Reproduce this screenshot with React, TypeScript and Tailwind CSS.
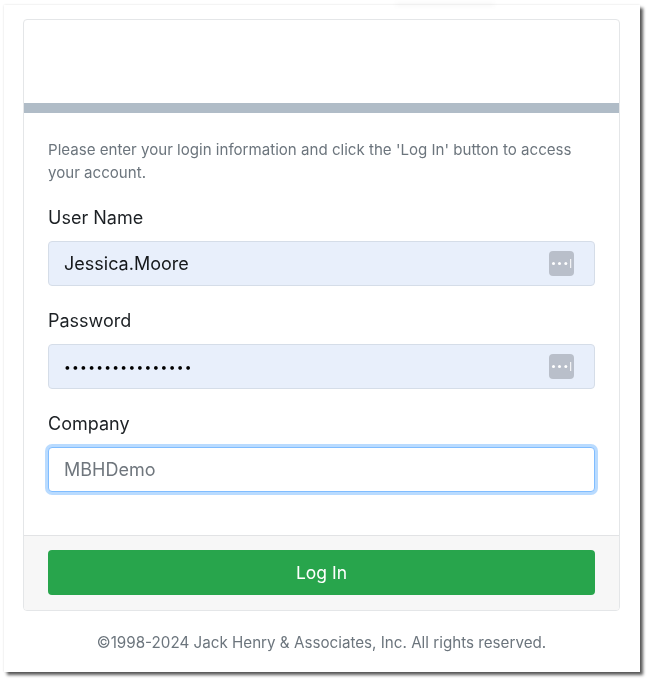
const sans = "font-['Inter','Liberation_Sans',sans-serif]";

function KeyIcon() {
  return (
    <svg className="h-[25px] w-[25px] shrink-0" viewBox="0 0 25 25">
      <rect width="25" height="25" rx="4" fill="#b9bfca" />
      <circle cx="4.5" cy="12.5" r="1.5" fill="#fff" />
      <circle cx="10.5" cy="12.5" r="1.5" fill="#fff" />
      <circle cx="16.8" cy="12.5" r="1.5" fill="#fff" />
      <path d="M21.7 8v9" stroke="#fff" strokeWidth="1" />
    </svg>
  );
}

function Field({ label, value, dots }: { label: string; value: string; dots?: boolean }) {
  return (
    <div className="flex flex-col">
      <label className="mb-[11px] text-[18px] leading-[24px] text-[#1c2024]">{label}</label>
      <div className="flex h-[45px] items-center justify-between rounded-[4px] border border-[#d5dde8] bg-[#e8effb] pl-[15px] pr-[20px]">
        <span className={dots ? "text-[12px] tracking-[1.3px] text-black" : "text-[18px] text-[#14171a]"}>{value}</span>
        <KeyIcon />
      </div>
    </div>
  );
}

export default function App() {
  return (
    <div className={`relative h-[684px] w-[652px] bg-white pb-[12px] pl-[4px] pr-[12px] pt-[5px] blur-[0.5px] ${sans}`}>
      <div className="absolute left-[395px] top-[3px] h-[3px] w-[100px] rounded-full bg-black/[0.03] blur-[2px]" />
      <div className="h-[667px] w-[636px] bg-white pl-[19px] pr-[20px] pt-[14px] shadow-[3px_3px_3px_rgba(0,0,0,0.65),0_0_2px_rgba(0,0,0,0.12)]">
        <div className="flex h-[592px] flex-col overflow-hidden rounded-[4px] border border-[#e4e6e8] bg-white">
          <div className="h-[83px] shrink-0" />
          <div className="h-[10px] shrink-0 bg-[#b0bcc7]" />
          <div className="flex flex-1 flex-col px-[24px] pt-[25px]">
            <p className="mb-[22px] text-[15.1px] leading-[23px] text-[#6c757d]">
              Please enter your login information and click the 'Log In' button to access your account.
            </p>
            <div className="flex flex-col gap-[23px]">
              <Field label="User Name" value="Jessica.Moore" />
              <Field label="Password" value="••••••••••••••••" dots />
              <div className="flex flex-col">
                <label className="mb-[11px] text-[18px] leading-[24px] text-[#1c2024]">Company</label>
                <div className="flex h-[45px] items-center rounded-[4px] border border-[#80bdff] bg-white pl-[15px] text-[18px] text-[#6f767d] shadow-[0_0_0_3px_rgba(128,189,255,0.55)]">
                  MBHDemo
                </div>
              </div>
            </div>
          </div>
          <div className="h-[75px] shrink-0 border-t border-[#e2e3e5] bg-[#f7f7f7] px-[24px] pt-[14px]">
            <button className="h-[45px] w-full rounded-[4px] bg-[#28a54c] pt-[2px] text-[17.5px] text-white">Log In</button>
          </div>
        </div>
        <p className="mt-[22px] text-center text-[15.2px] leading-[20px] text-[#6c757d]">
          ©1998-2024 Jack Henry &amp; Associates, Inc. All rights reserved.
        </p>
      </div>
    </div>
  );
}
